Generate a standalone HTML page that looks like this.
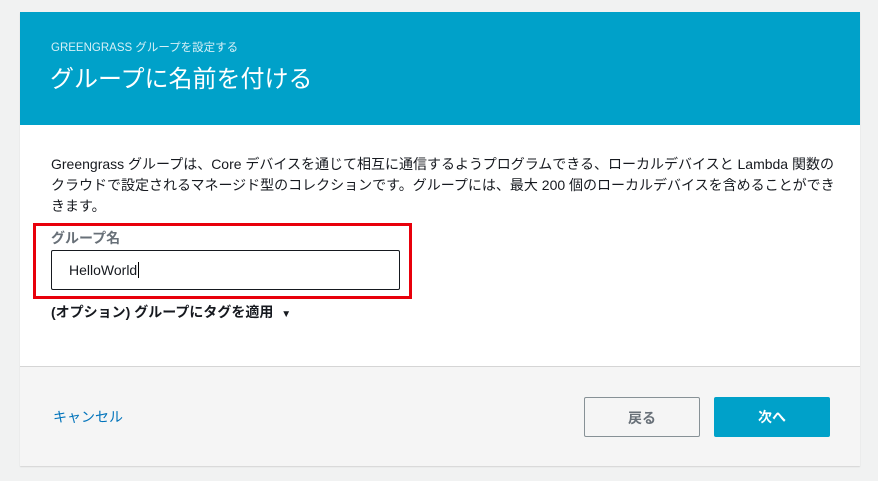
<!DOCTYPE html>
<html><head><meta charset="utf-8"><style>
*{margin:0;padding:0;box-sizing:border-box}
body{width:878px;height:481px;background:#f1f2f2;font-family:"Liberation Sans","Noto Sans CJK JP",sans-serif;position:relative;overflow:hidden}
.card{position:absolute;left:20px;top:12px;width:840px;height:454px;background:#fff;box-shadow:0 1px 1px rgba(0,0,0,.12)}
.hd{position:absolute;left:0;top:0;width:840px;height:113px;background:#00a1c9;color:#fff}
.sub{position:absolute;left:31px;top:27px;font-size:11.5px;color:#d6f0f7}
.ttl{position:absolute;left:30px;top:53px;font-size:24px;line-height:30px}
.p{position:absolute;left:31px;top:142px;width:800px;font-size:14px;line-height:21px;color:#16191f;white-space:nowrap}
.lbl{position:absolute;left:31px;top:216px;font-size:14px;font-weight:bold;color:#687078}
.inp{position:absolute;left:31px;top:238px;width:349px;height:40px;border:1px solid #16191f;border-radius:2px;font-size:14px;padding:11px 17px;color:#16191f}
.red{position:absolute;left:13px;top:211px;width:379px;height:76px;border:3px solid #e8000b}
.opt{position:absolute;left:31px;top:290px;font-size:14px;font-weight:bold;color:#16191f}
.ft{position:absolute;left:0;top:354px;width:840px;height:100px;background:#f5f5f5;border-top:1px solid #d5d5d5}
.cn{position:absolute;left:33px;top:40px;font-size:14px;color:#0073bb}
.b{position:absolute;top:30px;width:116px;height:40px;border-radius:2px;font-size:14px;font-weight:bold;text-align:center;line-height:40px}
.back{left:564px;border:1px solid #879196;color:#687078;background:#f5f5f5}
.next{left:694px;background:#00a1c9;color:#fff}
</style></head><body>
<div class="card">
<div class="hd"><div class="sub">GREENGRASS グループを設定する</div><div class="ttl">グループに名前を付ける</div></div>
<div class="p">Greengrass グループは、Core デバイスを通じて相互に通信するようプログラムできる、ローカルデバイスと Lambda 関数の<br>クラウドで設定されるマネージド型のコレクションです。グループには、最大 200 個のローカルデバイスを含めることができ<br>きます。</div>
<div class="red"></div>
<div class="lbl">グループ名</div>
<div class="inp">HelloWorld<span style="border-left:1px solid #000;margin-left:1px"></span></div>
<div class="opt">(オプション) グループにタグを適用 <span style="font-size:10px;margin-left:4px">▼</span></div>
<div class="ft"><div class="cn">キャンセル</div><div class="b back">戻る</div><div class="b next">次へ</div></div>
</div>
</body></html>
